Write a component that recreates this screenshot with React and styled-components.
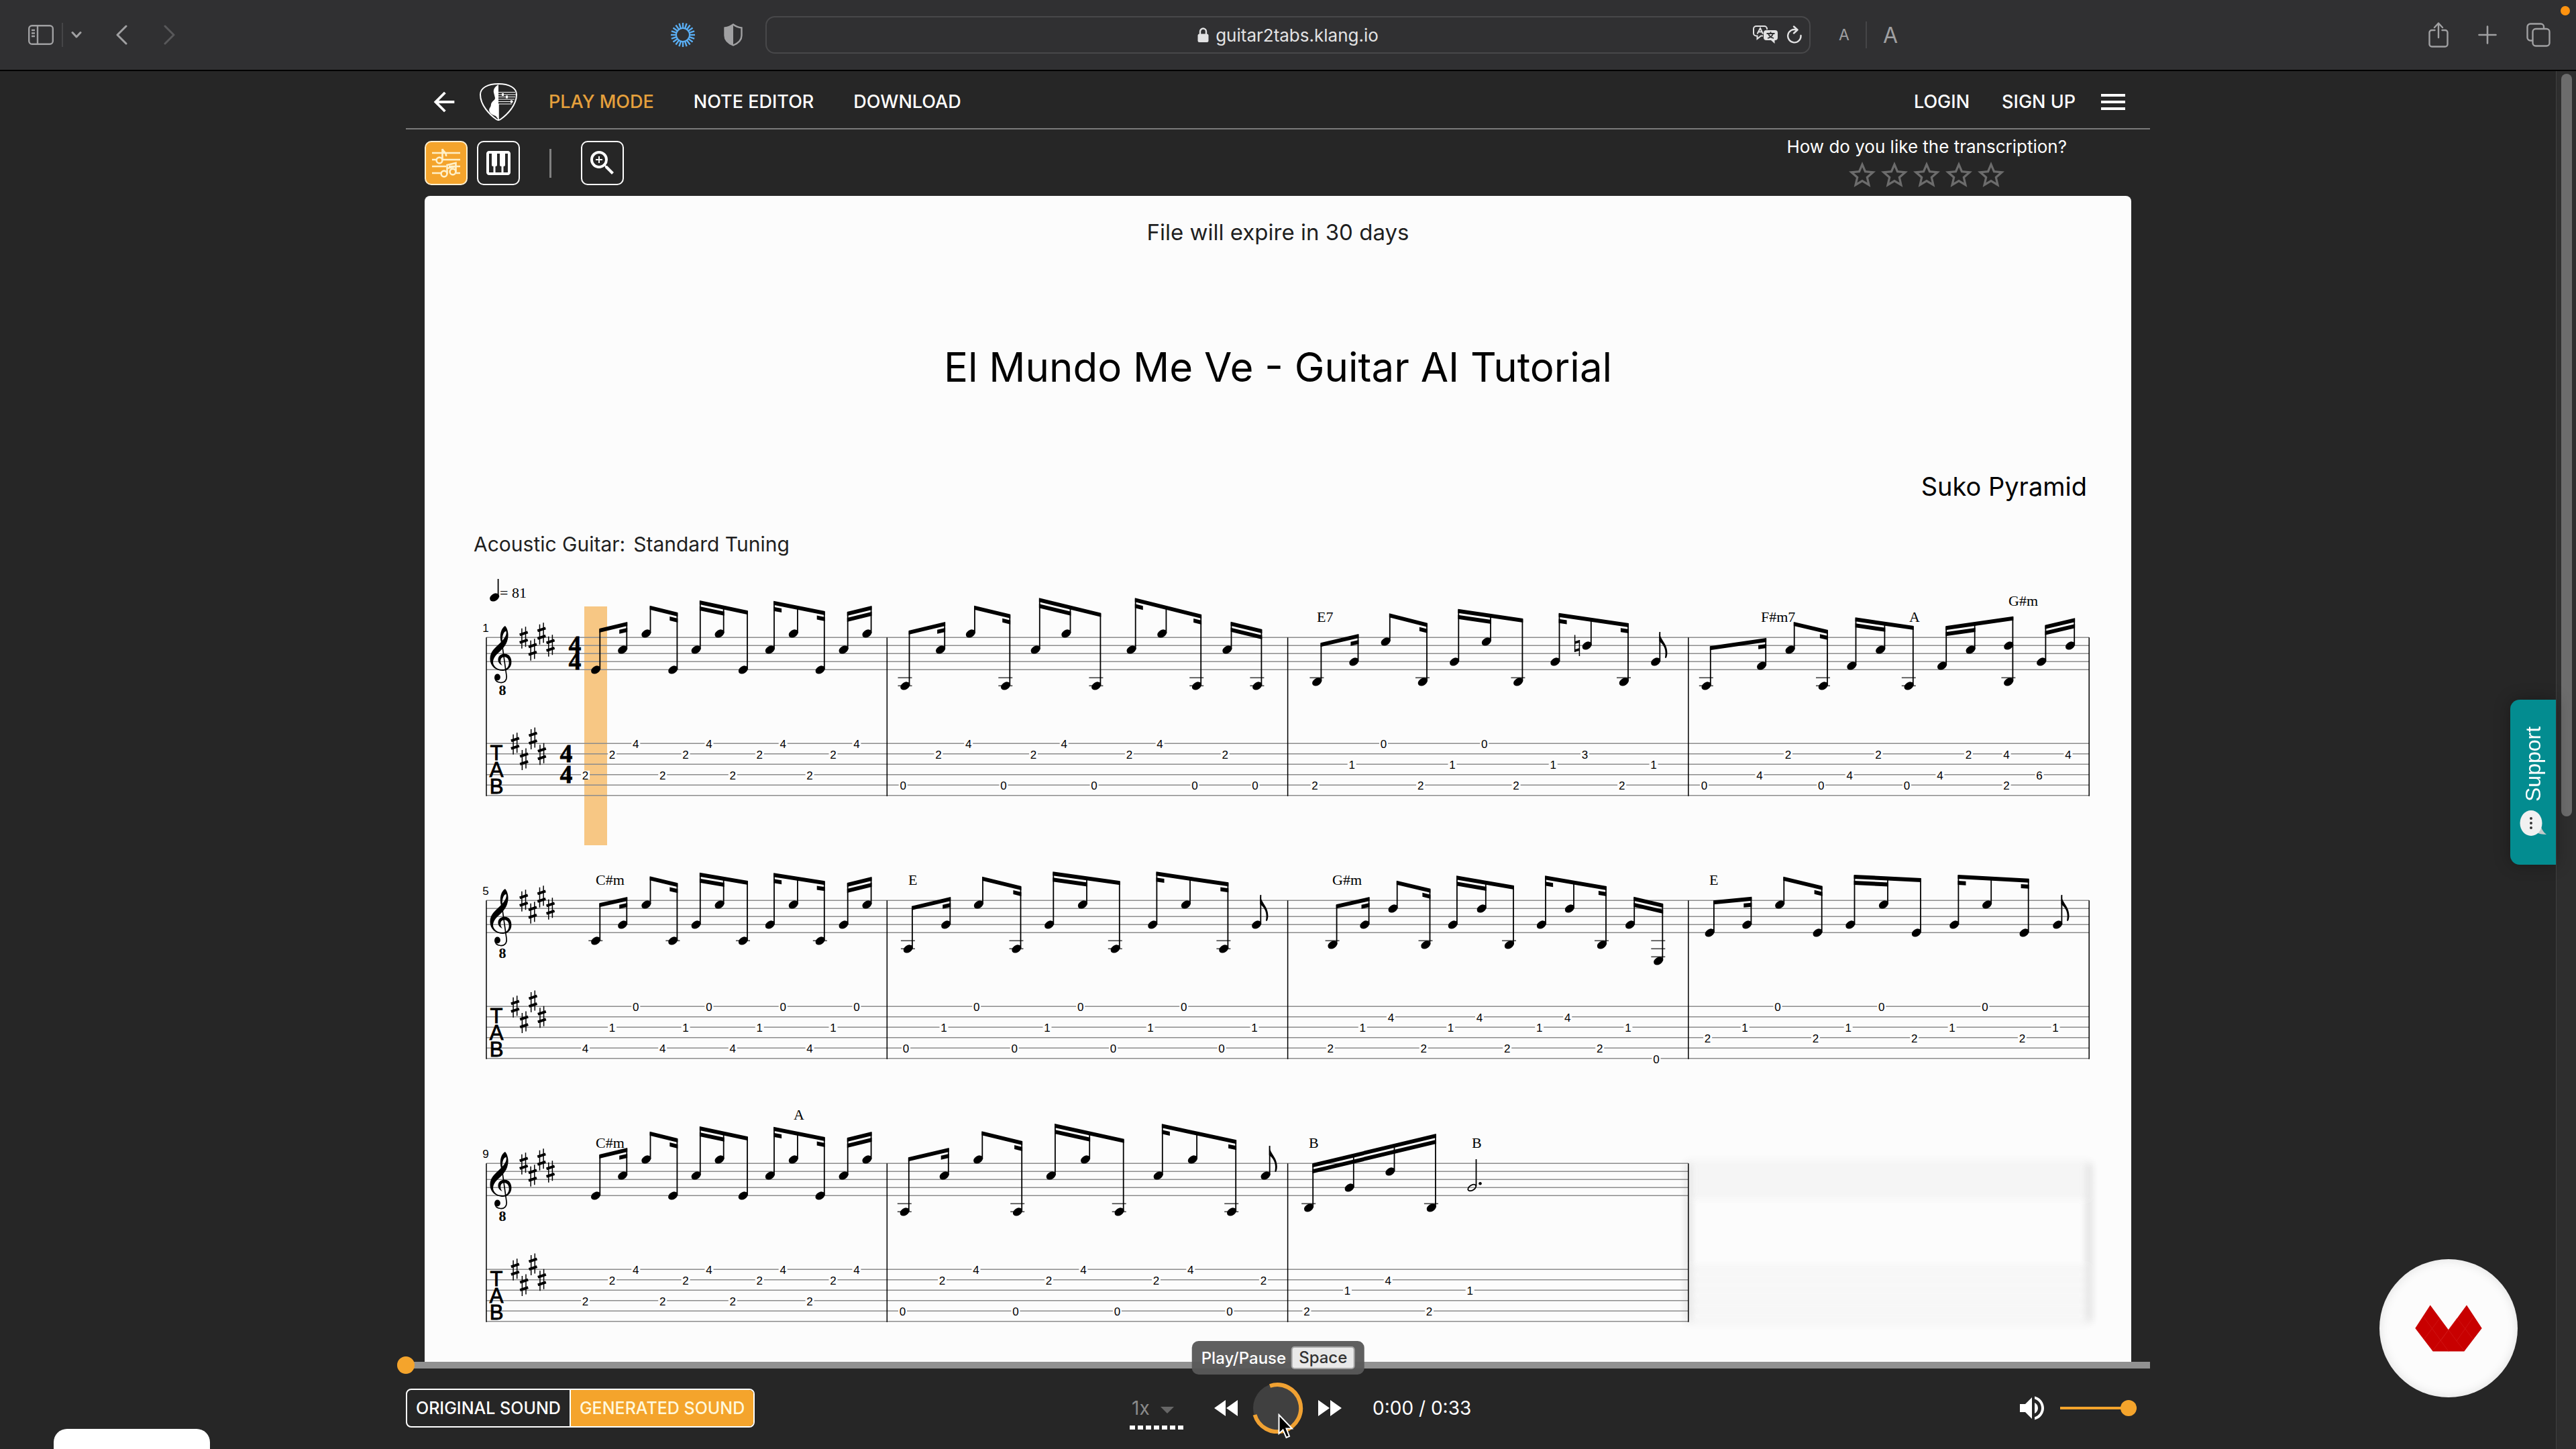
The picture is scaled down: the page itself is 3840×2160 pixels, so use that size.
import React from 'react';
import styled, { createGlobalStyle } from 'styled-components';
import {
	MdArrowBack,
	MdMenu,
	MdPiano,
	MdZoomIn,
	MdStarBorder,
	MdFastRewind,
	MdFastForward,
	MdVolumeUp,
	MdArrowDropDown,
} from 'react-icons/md';

const ORANGE = '#f4a42c';
const PAPER = '#fcfcfc';

const GlobalStyle = createGlobalStyle`
	* {
		box-sizing: border-box;
	}
	body {
		margin: 0;
		background: #262626;
		font-family: Inter, "Open Sans", sans-serif;
	}
	button {
		padding: 0;
		border: 0;
		background: none;
		color: inherit;
		font: inherit;
	}
	svg {
		display: block;
		flex-shrink: 0;
	}
`

/* ---------- browser window ---------- */

const Window = styled.div`
	position: relative;
	display: flex;
	flex-direction: column;
	height: 100vh;
	overflow: hidden;
`

const BrowserBar = styled.div`
	display: grid;
	grid-template-columns: 1fr minmax(0, 1558px) 1fr;
	align-items: center;
	height: 106px;
	flex-shrink: 0;
	border-bottom: 2px solid #000;
	background: #303032;
	color: #a0a0a2;
`

const BarSide = styled.div`
	display: flex;
	justify-content: space-between;
	align-items: center;
	padding: ${({ $end }) => ($end ? '0 38px 0 42px' : '0 34px 0 42px')};
`

const IconGroup = styled.div`
	display: flex;
	align-items: center;
	gap: ${({ $gap }) => $gap}px;
`

const Divider = styled.span`
	width: 2px;
	height: ${({ $height }) => $height}px;
	background: #454547;
`

const AddressBar = styled.div`
	display: grid;
	grid-template-columns: 1fr auto 1fr;
	align-items: center;
	height: 56px;
	padding: 0 10px;
	border: 2px solid #48484a;
	border-radius: 14px;
	color: #e2e2e3;
`

const Address = styled.a`
	display: flex;
	align-items: center;
	gap: 10px;
	grid-column: 2;
	color: inherit;
	font-size: 26px;
	text-decoration: none;
`

const AddressTools = styled(IconGroup)`
	justify-content: flex-end;
`

const TextSizeButton = styled.button`
	font-size: ${({ $large }) => ($large ? 32 : 23)}px;
`

const RecordDot = styled.span`
	position: absolute;
	top: 9px;
	right: 9px;
	width: 14px;
	height: 14px;
	border-radius: 50%;
	background: #ff9310;
`

const Body = styled.div`
	display: flex;
	flex: 1;
	min-height: 0;
`

const Page = styled.div`
	position: relative;
	display: flex;
	flex: 1;
	justify-content: center;
	min-width: 0;
`

const ScrollTrack = styled.div`
	width: 30px;
	padding: 4px 6px 0 7px;
	border-left: 1px solid #404040;
	background: #2e2e2e;
`

const ScrollThumb = styled.div`
	height: 54%;
	border-radius: 8px;
	background: #6c6c6c;
`

/* ---------- app ---------- */

const Workspace = styled.main`
	display: flex;
	flex-direction: column;
	width: 100%;
	max-width: 2600px;
	min-height: 0;
	color: #fff;
`

const Nav = styled.nav`
	display: flex;
	justify-content: space-between;
	align-items: center;
	height: 87px;
	padding: 7px 31px 0 34px;
	border-bottom: 2px solid #7a7a7a;
`

const NavLinks = styled.div`
	display: flex;
	align-items: center;
	gap: ${({ $gap }) => $gap}px;
`

const NavLink = styled.a`
	color: ${({ $active }) => ($active ? '#e5a03c' : '#fff')};
	font-size: 27px;
	font-weight: 500;
	line-height: 40px;
	text-decoration: none;
`

const Brand = styled.div`
	display: flex;
	align-items: center;
	gap: 30px;
	margin-right: 47px;
`

const Toolbar = styled.div`
	display: flex;
	justify-content: space-between;
	align-items: flex-start;
	height: 99px;
	padding: 8px 124px 0 28px;
`

const ViewTools = styled.div`
	display: flex;
	align-items: center;
	gap: 14px;
	padding-top: 9px;
`

const ToolButton = styled.button`
	display: flex;
	justify-content: center;
	align-items: center;
	width: 64px;
	height: 66px;
	border: 2px solid ${({ $active }) => ($active ? '#fff0d2' : '#fff')};
	border-radius: 10px;
	background: ${({ $active }) => ($active ? ORANGE : 'transparent')};
	color: ${({ $active }) => ($active ? '#fff0c8' : '#fff')};
`

const ToolSeparator = styled.span`
	width: 3px;
	height: 43px;
	margin: 0 30px;
	background: #808080;
`

const Rating = styled.div`
	display: flex;
	flex-direction: column;
	align-items: center;
	font-size: 26px;
	line-height: 36px;
`

const Stars = styled.div`
	display: flex;
	color: #6c6c6c;
`

/* ---------- sheet ---------- */

const Sheet = styled.section`
	flex: 1;
	min-height: 0;
	margin: 0 28px;
	padding-top: 32px;
	overflow: hidden;
	border-radius: 8px 8px 0 0;
	background: ${PAPER};
	color: #1f1f1f;
`

const Expiry = styled.p`
	margin: 0;
	font-size: 33px;
	line-height: 44px;
	text-align: center;
`

const SongTitle = styled.h1`
	margin: 139px 0 114px;
	color: #000;
	font-size: 60px;
	font-weight: 400;
	line-height: 80px;
	text-align: center;
`

const Artist = styled.p`
	margin: 0 66px 42px;
	color: #000;
	font-size: 38px;
	line-height: 48px;
	text-align: right;
`

const Tuning = styled.p`
	display: flex;
	gap: 12px;
	margin: 0 73px;
	font-size: 30px;
	line-height: 40px;
`

const ScoreSvg = styled.svg`
	width: 100%;

	.line {
		stroke: #8c8c8c;
		stroke-width: 1.4;
	}
	.bar {
		stroke: #000;
		stroke-width: 1.5;
	}
	.stem {
		stroke: #000;
		stroke-width: 1.8;
	}
	.ledger {
		stroke: #444;
		stroke-width: 1.6;
	}
	.fret {
		font: 17px "Liberation Sans", sans-serif;
		text-anchor: middle;
	}
	.tab {
		font: 31px "Liberation Sans", sans-serif;
		stroke: #000;
		stroke-width: 0.9;
		text-anchor: middle;
	}
	.chord {
		font: 22px "Liberation Serif", serif;
	}
	.octave {
		font: bold 22px "Liberation Serif", serif;
		text-anchor: middle;
	}
	.meter {
		font: bold 37px "Liberation Serif", serif;
		stroke: #000;
		stroke-width: 0.8;
		text-anchor: middle;
	}
`

/* ---------- player ---------- */

const Progress = styled.div`
	position: relative;
	height: 10px;
	flex-shrink: 0;
	background: #919191;
`

const Range = styled.input`
	display: block;
	height: 26px;
	appearance: none;
	background: transparent;

	&::-webkit-slider-thumb {
		appearance: none;
		width: ${({ $thumb }) => $thumb}px;
		height: ${({ $thumb }) => $thumb}px;
		border-radius: 50%;
		background: ${ORANGE};
	}
`

const SeekRange = styled(Range)`
	position: absolute;
	top: -8px;
	left: -13px;
	width: calc(100% + 26px);
	margin: 0;
`

const VolumeRange = styled(Range)`
	width: 114px;
	margin: 0;
	background: linear-gradient(${ORANGE}, ${ORANGE}) center / 100% 4px no-repeat;
`

const Player = styled.footer`
	display: grid;
	grid-template-columns: 1fr auto 1fr;
	align-items: center;
	column-gap: 45px;
	height: 120px;
	flex-shrink: 0;
	padding-bottom: 2px;
`

const PlayerSide = styled.div`
	display: flex;
	justify-content: space-between;
	align-items: center;
`

const SoundSwitch = styled.div`
	display: flex;
	height: 58px;
	overflow: hidden;
	border: 2px solid #fff;
	border-radius: 8px;
	font-size: 25px;
	font-weight: 500;
`

const SoundButton = styled.button`
	padding: 0 13px;
	background: ${({ $active }) => ($active ? ORANGE : 'transparent')};
	color: ${({ $active }) => ($active ? '#fff8dc' : '#fff')};

	& + & {
		border-left: 2px solid #fff;
	}
`

const Speed = styled.label`
	position: relative;
	color: #8a8a8a;

	svg {
		position: absolute;
		top: 10px;
		right: 0;
		color: #666;
	}
`

const SpeedSelect = styled.select`
	width: 80px;
	height: 64px;
	padding: 0 0 0 3px;
	border: 0;
	appearance: none;
	background: repeating-linear-gradient(to right, #fff 0 8px, transparent 8px 12px) bottom / 100% 6px no-repeat;
	color: inherit;
	font-family: inherit;
	font-size: 28px;
`

const Transport = styled.div`
	position: relative;
	display: flex;
	align-items: center;
	gap: 14px;
	margin: 0 -4px;
`

const Tooltip = styled.div`
	position: absolute;
	bottom: calc(100% + 12px);
	left: 50%;
	display: flex;
	align-items: center;
	gap: 8px;
	height: 50px;
	padding: 0 14px;
	border-radius: 10px;
	background: rgba(88, 88, 88, 0.96);
	font-size: 24px;
	font-weight: 500;
	transform: translateX(-50%);
`

const Key = styled.kbd`
	padding: 0 9px;
	border: 2px solid #a5a5a5;
	border-radius: 5px;
	background: #e9e9e9;
	color: #333;
	font-family: inherit;
	font-size: 24px;
	line-height: 30px;
`

const Pointer = styled.svg`
	position: absolute;
	top: 46px;
	left: 50%;
`

const Time = styled.span`
	font-size: 28px;
`

const Volume = styled.label`
	display: flex;
	align-items: center;
	gap: 18px;
	margin-right: 20px;
`

/* ---------- floating widgets ---------- */

const SupportTab = styled.button`
	position: absolute;
	top: 937px;
	right: 0;
	display: flex;
	justify-content: center;
	align-items: center;
	gap: 12px;
	width: 68px;
	height: 246px;
	border-radius: 0 14px 14px 0;
	background: #038c90;
	color: #fff;
	font: 32px "Liberation Sans", sans-serif;
	writing-mode: vertical-rl;
	transform: rotate(180deg);
	box-shadow: 0 0 24px rgba(0, 0, 0, 0.3);

	svg {
		transform: rotate(180deg);
	}
`

const Badge = styled.div`
	position: absolute;
	right: 57px;
	bottom: 77px;
	display: flex;
	justify-content: center;
	align-items: center;
	width: 206px;
	height: 206px;
	border-radius: 50%;
	background: ${PAPER};
	box-shadow: inset 0 0 16px rgba(0, 0, 0, 0.12);
`

const CornerCard = styled.div`
	position: absolute;
	bottom: 0;
	left: 80px;
	width: 233px;
	height: 30px;
	border-radius: 20px 20px 0 0;
	background: #fff;
`

/* ---------- score data ---------- */

const STAFF_TOP = 950.3;
const TAB_TOP = 1108.3;
const SYSTEM_STEP = 392;
const BAR_LINES = [725, 1322.3, 1919.6, 2516.8, 3114.2];

// a note is [stem x, staff step, string, fret]
// a beam is [first note, last note, y at start, y at end, secondary beams]
const repeat = (xs, pattern) => xs.map((x, i) => [x, ...pattern[i % pattern.length]]);

const OPENING_X = [894.3, 934.3, 969.5, 1009.4, 1043.8, 1078.7, 1114, 1154, 1188.9, 1228.8, 1263.7, 1298.6];

const OPENING = {
	notes: repeat(OPENING_X, [[8, 3, 2], [3, 1, 2], [-1, 0, 4]]),
	beams: [
		[0, 1, 937, 927, ['end']],
		[2, 3, 902.7, 913, ['end']],
		[4, 6, 895, 910.3, [[4, 5]]],
		[7, 9, 895.7, 911, ['start', 'end']],
		[10, 11, 912, 903, [[10, 11]]],
	],
	fretShift: 21.7,
};

const SYSTEMS = [
	{
		number: 1,
		meter: true,
		chords: [['E7', 1963, 927], ['F#m7', 2625, 927], ['A', 2846, 927], ['G#m', 2994, 903]],
		bars: [
			OPENING,
			{
				notes: [
					...repeat(
						[1355.5, 1408.2, 1453, 1505.3, 1549.8, 1595.5, 1640.4, 1692.7, 1738.4, 1790.2, 1835.5],
						[[12, 4, 0], [3, 1, 2], [-1, 0, 4]]
					),
					[1880.4, 12, 4, 0],
				],
				beams: [
					[0, 1, 940, 927, ['end']],
					[2, 3, 902.7, 915.7, ['end']],
					[4, 6, 891.3, 913.7, [[4, 5]]],
					[7, 9, 891.3, 916, ['start', 'end']],
					[10, 11, 926.7, 938, [[10, 11]]],
				],
			},
			{
				notes: [
					...repeat([1969.4, 2024.5, 2071.8, 2127, 2174.3, 2222, 2269.4, 2324.5], [[11, 4, 2], [6, 2, 1], [1, 0, 0]]),
					[2371.8, 2, 1, 3],
					[2427, 11, 4, 2],
					[2474.3, 6, 2, 1],
				],
				beams: [
					[0, 1, 958.3, 945, ['end']],
					[2, 3, 914.3, 928.7, ['end']],
					[4, 6, 907.7, 922, [[4, 5]]],
					[7, 9, 913.7, 929, ['start', 'end']],
				],
				flag: 942,
				natural: [2351, 962],
			},
			{
				notes: [
					...repeat(
						[2549.8, 2632.2, 2674.7, 2724, 2766.5, 2809.4, 2851.8, 2901.2, 2943.7],
						[[12, 4, 0], [7, 3, 4], [3, 1, 2]]
					),
					[3000.4, 11, 4, 2],
					[3049.4, 6, 3, 6],
					[3092.2, 2, 1, 4],
				],
				doubled: [[3000.4, 2, 1, 4]],
				beams: [
					[0, 1, 963.3, 951, ['end']],
					[2, 3, 927, 939, ['end']],
					[4, 6, 920.3, 933, [[4, 5]]],
					[7, 9, 933.3, 918.7, [[7, 8]]],
					[10, 11, 931.7, 921.3, [[10, 11]]],
				],
			},
		],
	},
	{
		number: 5,
		chords: [['C#m', 888, 927], ['E', 1354, 927], ['G#m', 1986, 927], ['E', 2548, 927]],
		bars: [
			{
				notes: repeat(OPENING_X, [[10, 4, 4], [6, 2, 1], [1, 0, 0]]),
				beams: [
					[0, 1, 954.3, 945, ['end']],
					[2, 3, 914.3, 924.3, ['end']],
					[4, 6, 908.7, 921, [[4, 5]]],
					[7, 9, 909.3, 921.3, ['start', 'end']],
					[10, 11, 924, 915, [[10, 11]]],
				],
				fretShift: 21.7,
			},
			{
				notes: repeat(
					[1359.9, 1416.3, 1465, 1521.5, 1570.3, 1620, 1668.8, 1724.4, 1774, 1830.4, 1879.3],
					[[12, 4, 0], [6, 2, 1], [1, 0, 0]]
				),
				beams: [
					[0, 1, 958.7, 945, ['end']],
					[2, 3, 914.7, 929, ['end']],
					[4, 6, 907.3, 921.3, [[4, 5]]],
					[7, 9, 907.3, 923.3, ['start', 'end']],
				],
				flag: 942,
			},
			{
				notes: [
					...repeat(
						[1992.6, 2040.6, 2082.7, 2131.5, 2171.9, 2214.8, 2256, 2304, 2346, 2394, 2436.2],
						[[11, 4, 2], [6, 2, 1], [2, 1, 4]]
					),
					[2478.3, 15, 5, 0],
				],
				beams: [
					[0, 1, 956.3, 945, ['end']],
					[2, 3, 920.7, 932.7, ['end']],
					[4, 6, 913.3, 928, [[4, 5]]],
					[7, 9, 913.3, 929, ['start', 'end']],
					[10, 11, 944.7, 955, [[10, 11]]],
				],
			},
			{
				notes: repeat(
					[2554.9, 2610.4, 2659.3, 2715.7, 2764.5, 2814, 2863, 2919.4, 2968.2, 3023.7, 3073.4],
					[[8, 3, 2], [6, 2, 1], [1, 0, 0]]
				),
				beams: [
					[0, 1, 950.3, 944.7, ['end']],
					[2, 3, 914.7, 928.7, ['end']],
					[4, 6, 912, 917, [[4, 5]]],
					[7, 9, 912, 917.7, ['start', 'end']],
				],
				flag: 942,
			},
		],
	},
	{
		number: 9,
		chords: [['C#m', 888, 927], ['A', 1183, 885], ['B', 1951, 927], ['B', 2194, 927]],
		bars: [
			OPENING,
			{
				notes: repeat(
					[1354.8, 1413.8, 1464.3, 1523.2, 1572.9, 1624.2, 1674.7, 1732.8, 1784.1, 1842.2, 1892.7],
					[[12, 4, 0], [3, 1, 2], [-1, 0, 4]]
				),
				beams: [
					[0, 1, 941.3, 927, ['end']],
					[2, 3, 902.3, 917, ['end']],
					[4, 6, 891, 913.7, [[4, 5]]],
					[7, 9, 891.3, 915.3, ['start', 'end']],
				],
				flag: 924,
			},
			{
				notes: [
					[1957.2, 11, 4, 2],
					[2017.8, 6, 2, 1],
					[2078.5, 2, 1, 4],
					[2139.9, 11, 4, 2],
				],
				half: [2200.5, 6, 2, 1],
				beams: [[0, 3, 950.3, 906, [[0, 3]]]],
			},
		],
	},
];

const staffY = (step) => STAFF_TOP + step * 6;
const tabY = (string) => TAB_TOP + string * 15.5;

/* ---------- score drawing ---------- */

const StaffLines = ({ from, to }) => (
	<g>
		{[0, 2, 4, 6, 8].map((step) => (
			<line key={step} className="line" x1={from} x2={to} y1={staffY(step)} y2={staffY(step)}/>
		))}
		{[0, 1, 2, 3, 4, 5].map((string) => (
			<line key={'t' + string} className="line" x1={from} x2={to} y1={tabY(string)} y2={tabY(string)}/>
		))}
	</g>
)

const Sharp = ({ x, y }) => (
	<g transform={`translate(${x} ${y})`} stroke="#000">
		<path d="M-2.8-13.5V16.5M2.8-16V14" strokeWidth="1.5"/>
		<path d="M-6-4L6-8M-6 7.5L6 3.5" strokeWidth="4"/>
	</g>
)

const Clef = () => (
	<g transform="translate(730 933)">
		<path d="M17 25C14 14 17 3 23 0C27 4 28.5 13 27 19C25 30 17 36 11 42C5 48 4 54 6 58C9 64 15 65.5 21 65C28 64 30 56 28 51C26 45 18 45 16.5 50C15.5 54 17 57 19 59C13 57 11 51 13.5 46C18 39 30 40 32 50C34 59 29 66.5 20 67C9 67 0.5 60 0.5 49C0.5 38 8 33 15 26C21 20 26 14 24.5 8C21 8 18 15 19 24Z"/>
		<path d="M18 24L25 74C26 81 22 85 16 84.5C11 84 8 81 8 77" fill="none" stroke="#000" strokeWidth="1.7"/>
		<ellipse cx="11.5" cy="76.5" rx="4.4" ry="5"/>
	</g>
)

const Head = ({ x, step, hollow }) => {
	const y = staffY(step);
	const ledgers = [10, 12, 14].filter((l) => l <= step);

	return (
		<g>
			{ledgers.map((l) => (
				<line key={l} className="ledger" x1={x - 17} x2={x + 4} y1={staffY(l)} y2={staffY(l)}/>
			))}
			<ellipse
				cx={x - 6.3}
				cy={y + 0.2}
				rx={hollow ? 6.6 : 7.6}
				ry={hollow ? 3.8 : 5.4}
				transform={`rotate(-32 ${x - 6.3} ${y})`}
				fill={hollow ? 'none' : '#000'}
				stroke="#000"
				strokeWidth={hollow ? 1.8 : 0}
			/>
		</g>
	);
}

const Fret = ({ x, string, fret }) => (
	<g>
		<rect x={x - 6.5} y={tabY(string) - 6} width="13" height="13" fill={PAPER}/>
		<text className="fret" x={x} y={tabY(string) + 7}>{fret}</text>
	</g>
)

const beamPath = (x1, y1, x2, y2) => `M${x1} ${y1}L${x2} ${y2}v6L${x1} ${y1 + 6}Z`;

const Beam = ({ notes, beam }) => {
	const [first, last, y1, y2, extra] = beam;
	const x1 = notes[first][0] - 0.9;
	const x2 = notes[last][0] + 0.9;
	const yAt = (x) => y1 + ((y2 - y1) * (x - x1)) / (x2 - x1);
	const second = (a, b) => beamPath(a, yAt(a) + 9, b, yAt(b) + 9);

	return (
		<g>
			{notes.slice(first, last + 1).map(([x, step]) => (
				<line key={x} className="stem" x1={x} x2={x} y1={yAt(x) + 1} y2={staffY(step) - 1}/>
			))}
			<path d={beamPath(x1, y1, x2, y2)}/>
			{extra.map((item) => {
				if (item === 'start') return <path key={item} d={second(x1, x1 + 12)}/>;
				if (item === 'end') return <path key={item} d={second(x2 - 12, x2)}/>;
				return <path key="span" d={second(notes[item[0]][0] - 0.9, notes[item[1]][0] + 0.9)}/>;
			})}
		</g>
	);
}

const Bar = ({ bar }) => {
	const { notes, beams, doubled = [], half, flag, natural, fretShift = 9.3 } = bar;
	const last = notes[notes.length - 1];
	const all = [...notes, ...doubled];

	return (
		<g>
			{all.map(([x, step]) => <Head key={x + '-' + step} x={x} step={step}/>)}
			{beams.map((beam) => <Beam key={beam[0]} notes={notes} beam={beam}/>)}
			{all.map(([x, , string, fret]) => (
				<Fret key={x + '-' + string} x={x - fretShift} string={string} fret={fret}/>
			))}
			{flag && (
				<g>
					<line className="stem" x1={last[0]} x2={last[0]} y1={flag} y2={staffY(last[1]) - 1}/>
					<path transform={`translate(${last[0] - 0.9} ${flag})`} d="M0 0C1 11 12 17 12 31C12 35 11 38 10 39L8.5 38.5C11 27 7 19 0 14Z"/>
				</g>
			)}
			{natural && (
				<g transform={`translate(${natural[0]} ${natural[1]})`} stroke="#000">
					<path d="M-3.4-15.5V10M3.4-8V16" strokeWidth="1.5"/>
					<path d="M-3.4-4L3.4-6M-3.4 8L3.4 6" strokeWidth="3.6"/>
				</g>
			)}
			{half && (
				<g>
					<Head x={half[0]} step={half[1]} hollow/>
					<line className="stem" x1={half[0]} x2={half[0]} y1="944" y2={staffY(half[1]) - 2}/>
					<circle cx={half[0] + 6} cy={staffY(half[1]) - 6} r="2.3"/>
					<Fret x={half[0] - fretShift} string={half[2]} fret={half[3]}/>
				</g>
			)}
		</g>
	);
}

const KEY_SIGNATURE = [[780.7, 0], [794, 3], [807.3, -1], [820.6, 2]];

const System = ({ system, index }) => {
	const end = system.bars.length;

	return (
		<g transform={`translate(0 ${index * SYSTEM_STEP})`}>
			<StaffLines from={BAR_LINES[0]} to={BAR_LINES[end]}/>
			{BAR_LINES.slice(0, end + 1).map((x) => (
				<line key={x} className="bar" x1={x} x2={x} y1={STAFF_TOP} y2={tabY(5) + 1}/>
			))}
			<text className="fret" x="724" y="942">{system.number}</text>
			<Clef/>
			<text className="octave" x="749" y="1036">8</text>
			{KEY_SIGNATURE.map(([x, step]) => (
				<g key={x}>
					<Sharp x={x} y={staffY(step)}/>
					<Sharp x={x - 12.8} y={TAB_TOP + step * 7.75}/>
				</g>
			))}
			<text className="tab">
				<tspan x="740" y="1133">T</tspan>
				<tspan x="740" y="1158">A</tspan>
				<tspan x="740" y="1183">B</tspan>
			</text>
			{system.meter && (
				<g>
					<text className="meter">
						<tspan x="857" y="974">4</tspan>
						<tspan x="857" y="998">4</tspan>
					</text>
					<text className="meter">
						<tspan x="844" y="1136">4</tspan>
						<tspan x="844" y="1167">4</tspan>
					</text>
				</g>
			)}
			{system.bars.map((bar, i) => <Bar key={i} bar={bar}/>)}
			{system.chords.map(([name, x, y]) => (
				<text key={x} className="chord" x={x} y={y}>{name}</text>
			))}
		</g>
	);
}

const Score = () => (
	<ScoreSvg viewBox="633 831 2544 1199" role="img" aria-label="Guitar score">
		<defs>
			<filter id="soft" filterUnits="userSpaceOnUse" x="2480" y="900" width="680" height="330">
				<feGaussianBlur stdDeviation="6"/>
			</filter>
		</defs>
		<g transform={`translate(0 ${2 * SYSTEM_STEP})`} filter="url(#soft)" opacity="0.45">
			<StaffLines from={BAR_LINES[3]} to={BAR_LINES[4]}/>
			<path d={`M${BAR_LINES[3]} 950V1186M${BAR_LINES[4]} 950V1186`} stroke="#000" strokeWidth="2.4"/>
		</g>
		<rect x="871" y="904" width="34" height="356" fill="#f7c784"/>
		<Head x={743.3} step={-10}/>
		<line className="stem" x1="742.6" x2="742.6" y1="863" y2="890"/>
		<text className="chord" x="745" y="891">= 81</text>
		{SYSTEMS.map((system, i) => <System key={system.number} system={system} index={i}/>)}
	</ScoreSvg>
)

/* ---------- icons ---------- */

const SidebarIcon = () => (
	<svg width="38" height="30" viewBox="0 0 38 30" fill="none" stroke="currentColor" strokeWidth="2.4">
		<rect x="1.2" y="1.2" width="35.6" height="27.6" rx="4.5"/>
		<path d="M14 1V29M5 8H10M5 12.5H10M5 17H10"/>
	</svg>
)

const ChevronIcon = ({ d, width, height, dim }) => (
	<svg width={width} height={height} fill="none" stroke={dim ? '#58585a' : 'currentColor'} strokeWidth="3" strokeLinecap="round" strokeLinejoin="round">
		<path d={d}/>
	</svg>
)

const BurstIcon = () => (
	<svg width="36" height="36" viewBox="-18 -18 36 36" stroke="#5aaff5">
		{Array.from({ length: 20 }, (_, i) => (
			<path key={i} d="M0-10V-18" strokeWidth="2.4" transform={`rotate(${i * 18})`}/>
		))}
		<circle r="10" fill="none" strokeWidth="2"/>
	</svg>
)

const ShieldIcon = () => (
	<svg width="28" height="34" viewBox="0 0 28 34">
		<path d="M14 1.5C18 4.5 22 6 26.5 6.5V18C26.5 25 20 30 14 32.5C8 30 1.5 25 1.5 18V6.5C6 6 10 4.5 14 1.5Z" fill="none" stroke="currentColor" strokeWidth="2.4"/>
		<path d="M14 1.5V32.5C8 30 1.5 25 1.5 18V6.5C6 6 10 4.5 14 1.5Z" fill="currentColor"/>
	</svg>
)

const LockIcon = () => (
	<svg width="17" height="24" viewBox="0 0 17 24">
		<path d="M4 11V7A4.5 4.5 0 0 1 13 7V11" fill="none" stroke="currentColor" strokeWidth="2.4"/>
		<rect x="0.5" y="10.5" width="16" height="12.5" rx="2.5" fill="currentColor"/>
	</svg>
)

const TranslateIcon = () => (
	<svg width="38" height="28" viewBox="0 0 38 28" fill="none" stroke="currentColor" strokeWidth="2">
		<path d="M15 15.5H12L6.5 20V15.5H5A4 4 0 0 1 1 11.5V5A4 4 0 0 1 5 1H17A4 4 0 0 1 21 5V6"/>
		<path d="M6.5 12.5L11 4L15 12.5M8 9.5H14"/>
		<path d="M20 7H33A4 4 0 0 1 37 11V18A4 4 0 0 1 33 22H32.5V27L27 22H20A4 4 0 0 1 16 18V11A4 4 0 0 1 20 7Z" fill="currentColor" stroke="none"/>
		<path d="M20.5 12H32.5M26.5 9.5V12M23 12C24 15.5 27 18 31 19M30 12C29 15.5 26 18 22 19" stroke="#303032" strokeWidth="1.8"/>
	</svg>
)

const ReloadIcon = () => (
	<svg width="24" height="28" viewBox="0 0 24 28" fill="none" stroke="currentColor" strokeWidth="2.4" strokeLinecap="round" strokeLinejoin="round">
		<path d="M15 6.5A9.7 9.7 0 1 0 21.5 15M11 1.5L16.5 6.5L11 11.5"/>
	</svg>
)

const ShareIcon = () => (
	<svg width="30" height="38" viewBox="0 0 30 38" fill="none" stroke="currentColor" strokeWidth="2.4" strokeLinecap="round" strokeLinejoin="round">
		<path d="M9.5 12H5A3.5 3.5 0 0 0 1.5 15.5V33A3.5 3.5 0 0 0 5 36.5H25A3.5 3.5 0 0 0 28.5 33V15.5A3.5 3.5 0 0 0 25 12H20.5M15 23V2M9 8L15 1.5L21 8"/>
	</svg>
)

const PlusIcon = () => (
	<svg width="28" height="28" stroke="currentColor" strokeWidth="2.6" strokeLinecap="round">
		<path d="M14 1.5V26.5M1.5 14H26.5"/>
	</svg>
)

const TabsIcon = () => (
	<svg width="36" height="36" viewBox="0 0 36 36" fill="none" stroke="currentColor" strokeWidth="2.4">
		<rect x="9.5" y="9" width="25" height="25.5" rx="4.5"/>
		<path d="M9 26.5H6A4.5 4.5 0 0 1 1.5 22V6A4.5 4.5 0 0 1 6 1.5H21.5A4.5 4.5 0 0 1 26 6V8.5"/>
	</svg>
)

const PickLogo = () => (
	<svg width="56" height="56" viewBox="0 0 56 56">
		<path d="M28 1C44 1 55 7 55 17C55 33 41 47 31 54Q28 56 25 54C15 47 1 33 1 17C1 7 12 1 28 1Z" fill="none" stroke="#fff" strokeWidth="2"/>
		<path d="M28 2C23 5 20 9 21 14L23 22C23 25 20 26 18 29C16 32 18 33 15 37C12 42 17 47 24 49L28 54Z" fill="#fff"/>
		<path d="M28 13.5H53M28 17H54M28 20.5H53M28 24H52M28 27.5H50M28 31H48" stroke="#fff" strokeWidth="1.2"/>
		<path d="M28 31V54" stroke="#fff" strokeWidth="1.5"/>
		<path d="M33 15H36V19H33ZM39 18.5H42V22.5H39ZM46 25.5H49V29.5H46Z" fill="#fff"/>
	</svg>
)

const StaffIcon = () => (
	<svg width="44" height="44" viewBox="-1 -1 44 44" fill="none" stroke="currentColor" strokeWidth="2.6">
		<path d="M0 6H42M0 16H6M16 16H42M0 26H21M25 26H42M0 36H13M36 36H42"/>
		<circle cx="11" cy="17" r="4.4"/>
		<path d="M15.5 17V0C17 5 22 5 21 11"/>
		<circle cx="18" cy="37" r="4.4"/>
		<circle cx="31" cy="34" r="4.4"/>
		<path d="M22.5 37V24L35.5 21V34M22.5 29L35.5 26"/>
	</svg>
)

const PlayIcon = () => (
	<svg width="76" height="76" viewBox="-38 -38 76 76">
		<circle r="37" fill="#404040"/>
		<path d="M-12-33A35 35 0 1 1-34.5 10" fill="none" stroke="#f0a132" strokeWidth="6"/>
	</svg>
)

const BubbleIcon = () => (
	<svg width="42" height="42" viewBox="0 0 42 42">
		<path d="M33 26C35 31 37 34 41 37C35 37 29 36 25 33Z" fill="#c3c9c9"/>
		<ellipse cx="18" cy="20" rx="16.500" ry="19" fill="#f1f1f1"/>
		<g fill="#333">
			<circle cx="18" cy="13" r="2"/>
			<circle cx="18" cy="20" r="2"/>
			<circle cx="18" cy="27" r="2"/>
		</g>
	</svg>
)

const BadgeLogo = () => (
	<svg width="100" height="70" viewBox="-50 -35 100 70">
		<path d="M-49.7 0L-27.3-34.5L0 2.5L27-34.5L49.7 0L23.3 34.5H-23.3Z" fill="#c80000"/>
		<path d="M-37-17L0 34.5M-13-15L-37 17M13-15L-24 34M37-17L12 19M-12 19L0 2.5L12 19L24 34M13-15L37 17" fill="none" stroke="#d01818" strokeWidth="0.8"/>
	</svg>
)

/* ---------- page ---------- */

const Browser = () => (
	<BrowserBar>
		<BarSide>
			<IconGroup $gap={50}>
				<IconGroup $gap={12}>
					<SidebarIcon/>
					<Divider $height={36}/>
					<ChevronIcon width={16} height={12} d="M2 2.5L8 9L14 2.5"/>
				</IconGroup>
				<IconGroup $gap={54}>
					<ChevronIcon width={18} height={30} d="M16 2L3 15L16 28"/>
					<ChevronIcon width={18} height={30} d="M2 2L15 15L2 28" dim/>
				</IconGroup>
			</IconGroup>
			<IconGroup $gap={43}>
				<BurstIcon/>
				<ShieldIcon/>
			</IconGroup>
		</BarSide>
		<AddressBar>
			<Address href="#">
				<LockIcon/>
				guitar2tabs.klang.io
			</Address>
			<AddressTools $gap={12}>
				<TranslateIcon/>
				<ReloadIcon/>
			</AddressTools>
		</AddressBar>
		<BarSide $end>
			<IconGroup $gap={24}>
				<TextSizeButton>A</TextSizeButton>
				<Divider $height={40}/>
				<TextSizeButton $large>A</TextSizeButton>
			</IconGroup>
			<IconGroup $gap={44}>
				<ShareIcon/>
				<PlusIcon/>
				<TabsIcon/>
			</IconGroup>
		</BarSide>
	</BrowserBar>
)

const Header = () => (
	<>
		<Nav>
			<NavLinks $gap={0}>
				<Brand>
					<MdArrowBack size={46}/>
					<PickLogo/>
				</Brand>
				<NavLinks $gap={59}>
					<NavLink href="#" $active>PLAY MODE</NavLink>
					<NavLink href="#">NOTE EDITOR</NavLink>
					<NavLink href="#">DOWNLOAD</NavLink>
				</NavLinks>
			</NavLinks>
			<NavLinks $gap={48}>
				<NavLink href="#">LOGIN</NavLink>
				<NavLinks $gap={32}>
					<NavLink href="#">SIGN UP</NavLink>
					<button aria-label="Menu"><MdMenu size={48}/></button>
				</NavLinks>
			</NavLinks>
		</Nav>
		<Toolbar>
			<ViewTools>
				<ToolButton $active aria-label="Sheet"><StaffIcon/></ToolButton>
				<ToolButton aria-label="Piano"><MdPiano size={48}/></ToolButton>
				<ToolSeparator/>
				<ToolButton aria-label="Zoom"><MdZoomIn size={48}/></ToolButton>
			</ViewTools>
			<Rating>
				How do you like the transcription?
				<Stars>
					{[1, 2, 3, 4, 5].map((n) => (
						<button key={n} aria-label={`${n} stars`}><MdStarBorder size={48}/></button>
					))}
				</Stars>
			</Rating>
		</Toolbar>
	</>
)

const Controls = () => (
	<>
		<Progress>
			<SeekRange type="range" min="0" max="33" defaultValue="0" $thumb={26} aria-label="Position"/>
		</Progress>
		<Player>
			<PlayerSide>
				<SoundSwitch>
					<SoundButton>ORIGINAL SOUND</SoundButton>
					<SoundButton $active>GENERATED SOUND</SoundButton>
				</SoundSwitch>
				<Speed>
					<SpeedSelect aria-label="Speed" defaultValue="1x">
						<option>1x</option>
					</SpeedSelect>
					<MdArrowDropDown size={48}/>
				</Speed>
			</PlayerSide>
			<Transport>
				<Tooltip>
					Play/Pause
					<Key>Space</Key>
				</Tooltip>
				<button aria-label="Rewind"><MdFastRewind size={48}/></button>
				<button aria-label="Play"><PlayIcon/></button>
				<button aria-label="Forward"><MdFastForward size={48}/></button>
				<Pointer width="24" height="40" viewBox="0 0 24 40">
					<path d="M1.5 2V30L7.5 24.5L12.5 36L17 34L12.5 22.5H21Z" fill="#000" stroke="#fff" strokeWidth="2"/>
				</Pointer>
			</Transport>
			<PlayerSide>
				<Time>0:00 / 0:33</Time>
				<Volume>
					<MdVolumeUp size={48}/>
					<VolumeRange type="range" defaultValue="100" $thumb={24} aria-label="Volume"/>
				</Volume>
			</PlayerSide>
		</Player>
	</>
)

const App = () => {

	return (
		<Window>
			<GlobalStyle/>
			<Browser/>
			<RecordDot/>
			<Body>
				<Page>
					<Workspace>
						<Header/>
						<Sheet>
							<Expiry>File will expire in 30 days</Expiry>
							<SongTitle>El Mundo Me Ve - Guitar AI Tutorial</SongTitle>
							<Artist>Suko Pyramid</Artist>
							<Tuning>
								<span>Acoustic Guitar:</span>
								<span>Standard Tuning</span>
							</Tuning>
							<Score/>
						</Sheet>
						<Controls/>
					</Workspace>
					<SupportTab>
						<BubbleIcon/>
						Support
					</SupportTab>
					<Badge><BadgeLogo/></Badge>
					<CornerCard/>
				</Page>
				<ScrollTrack>
					<ScrollThumb/>
				</ScrollTrack>
			</Body>
		</Window>
	);
}

export default App
